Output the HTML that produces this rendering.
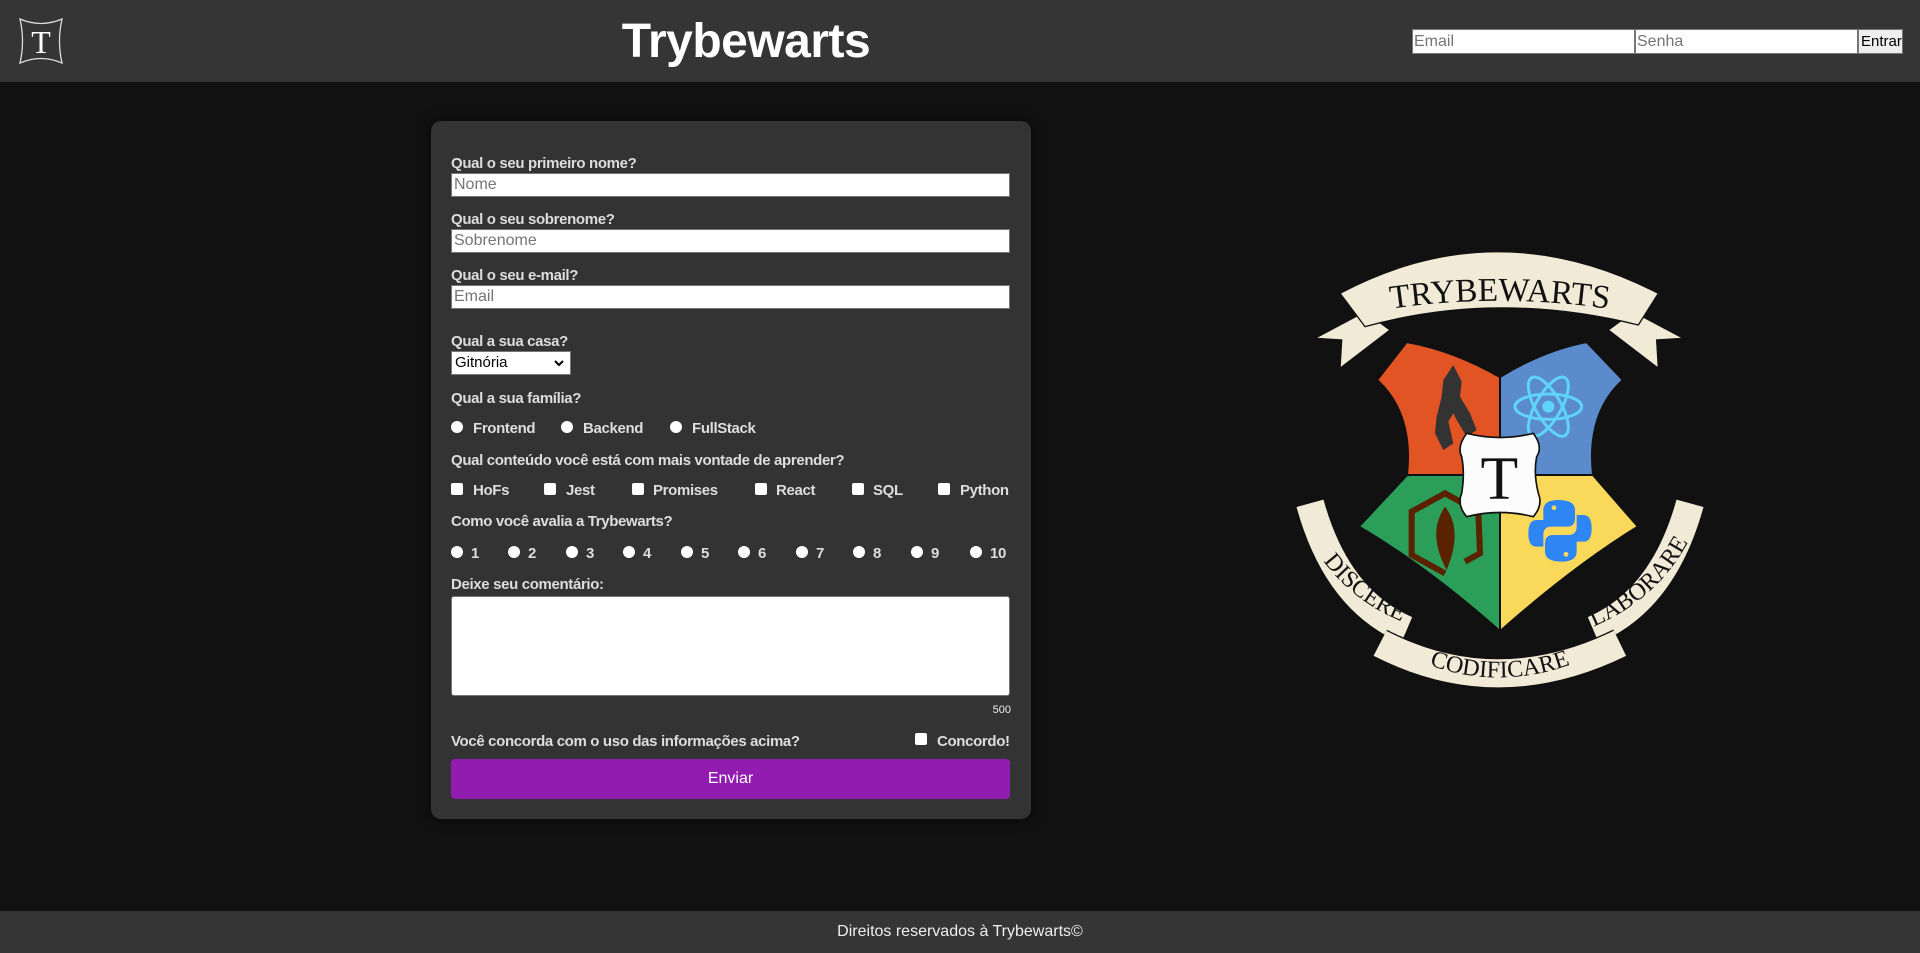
<!DOCTYPE html>
<html><head><meta charset="utf-8"><style>
*{box-sizing:border-box;margin:0;padding:0}
body{width:1920px;height:953px;background:#111;font-family:"Liberation Sans",sans-serif;position:relative;overflow:hidden}
header{position:absolute;left:0;top:0;width:1920px;height:82px;background:#353535}
.title{position:absolute;left:546px;width:400px;top:14px;text-align:center;color:#fff;font-weight:bold;font-size:48px;line-height:56px;letter-spacing:-0.5px}
.ti{position:absolute;top:29px;height:25px;background:#fff;border:1px solid #767676;font-size:16px;color:#757575;line-height:23px;padding-left:1px}
.card{position:absolute;left:431px;top:121px;width:600px;height:698px;background:#333;border-radius:10px;box-shadow:0 0 12px rgba(0,0,0,.6)}
.l{position:absolute;left:20px;color:#ddd;font-weight:bold;font-size:15px;line-height:18px;letter-spacing:-0.35px;white-space:nowrap;margin-top:3px}
.in{position:absolute;left:20px;width:559px;height:24px;background:#fff;border:1px solid #767676;color:#757575;font-size:16px;line-height:22px;padding-left:2px}
.r{position:absolute;width:12px;height:12px;border-radius:50%;background:#fff;margin-top:1px}
.c{position:absolute;width:12px;height:12px;border-radius:2px;background:#fff;margin-top:1px}
footer{position:absolute;left:0;top:911px;width:1920px;height:42px;background:#353535;color:#eee;font-size:16px;text-align:center;line-height:42px}
</style></head><body>
<header>
<svg style="position:absolute;left:17px;top:16px" width="48" height="50" viewBox="0 0 48 50">
<path d="M3,3 Q24,12 45,3 Q40,25 45,47 Q24,38 3,47 Q8,25 3,3Z" fill="none" stroke="#ddd" stroke-width="1.3"/>
<text x="24" y="37" text-anchor="middle" font-family="Liberation Serif,serif" font-size="32" fill="#fff">T</text>
</svg>
<div class="title">Trybewarts</div>
<div class="ti" style="left:1412px;width:223px">Email</div>
<div class="ti" style="left:1635px;width:223px">Senha</div>
<div class="ti" style="left:1858px;width:45px;background:#efefef;color:#000;font-size:15px;padding-left:2px">Entrar</div>
</header>

<div class="card">
<div class="l" style="top:31px">Qual o seu primeiro nome?</div>
<div class="in" style="top:52px">Nome</div>
<div class="l" style="top:87px">Qual o seu sobrenome?</div>
<div class="in" style="top:108px">Sobrenome</div>
<div class="l" style="top:143px">Qual o seu e-mail?</div>
<div class="in" style="top:164px">Email</div>
<div class="l" style="top:209px">Qual a sua casa?</div>
<div class="in" style="top:230px;width:120px;color:#000;font-size:15px;padding-left:3px">Gitnória<svg style="position:absolute;right:6px;top:8px" width="10" height="7" viewBox="0 0 10 7"><path d="M1,1 L5,5 L9,1" fill="none" stroke="#000" stroke-width="2"/></svg></div>
<div class="l" style="top:266px">Qual a sua família?</div>
<div class="r" style="left:20px;top:299px"></div><div class="l" style="left:42px;top:296px">Frontend</div>
<div class="r" style="left:130px;top:299px"></div><div class="l" style="left:152px;top:296px">Backend</div>
<div class="r" style="left:239px;top:299px"></div><div class="l" style="left:261px;top:296px">FullStack</div>
<div class="l" style="top:328px">Qual conteúdo você está com mais vontade de aprender?</div>
<div class="c" style="left:20px;top:361px"></div><div class="l" style="left:42px;top:358px">HoFs</div>
<div class="c" style="left:113px;top:361px"></div><div class="l" style="left:135px;top:358px">Jest</div>
<div class="c" style="left:201px;top:361px"></div><div class="l" style="left:222px;top:358px">Promises</div>
<div class="c" style="left:324px;top:361px"></div><div class="l" style="left:345px;top:358px">React</div>
<div class="c" style="left:421px;top:361px"></div><div class="l" style="left:442px;top:358px">SQL</div>
<div class="c" style="left:507px;top:361px"></div><div class="l" style="left:529px;top:358px">Python</div>
<div class="l" style="top:389px">Como você avalia a Trybewarts?</div>
<div class="r" style="left:20px;top:424px"></div><div class="l" style="left:40px;top:421px">1</div>
<div class="r" style="left:77px;top:424px"></div><div class="l" style="left:97px;top:421px">2</div>
<div class="r" style="left:135px;top:424px"></div><div class="l" style="left:155px;top:421px">3</div>
<div class="r" style="left:192px;top:424px"></div><div class="l" style="left:212px;top:421px">4</div>
<div class="r" style="left:250px;top:424px"></div><div class="l" style="left:270px;top:421px">5</div>
<div class="r" style="left:307px;top:424px"></div><div class="l" style="left:327px;top:421px">6</div>
<div class="r" style="left:365px;top:424px"></div><div class="l" style="left:385px;top:421px">7</div>
<div class="r" style="left:422px;top:424px"></div><div class="l" style="left:442px;top:421px">8</div>
<div class="r" style="left:480px;top:424px"></div><div class="l" style="left:500px;top:421px">9</div>
<div class="r" style="left:539px;top:424px"></div><div class="l" style="left:559px;top:421px">10</div>
<div class="l" style="top:452px">Deixe seu comentário:</div>
<div class="in" style="top:475px;height:100px;border-radius:3px"></div>
<div style="position:absolute;right:20px;top:583px;color:#eee;font-size:11px">500</div>
<div class="l" style="top:609px">Você concorda com o uso das informações acima?</div>
<div class="c" style="left:484px;top:611px"></div><div class="l" style="left:506px;top:609px">Concordo!</div>
<div style="position:absolute;left:20px;top:638px;width:559px;height:40px;background:#921cb0;border-radius:4px;color:#fff;text-align:center;line-height:40px;font-size:16px">Enviar</div>
</div>

<svg style="position:absolute;left:1280px;top:240px" width="440" height="460" viewBox="0 0 1320 1380">
<defs>
<clipPath id="sh"><path d="M290,420 L380,305 Q520,330 660,410 Q790,330 920,305 L1030,420 Q920,520 940,705 L1075,860 Q880,980 660,1175 Q440,980 235,860 L380,705 Q400,520 290,420 Z"/></clipPath>
<path id="tp" d="M250,220 Q650,145 1070,220"/>
<path id="lp" d="M120,950 Q220,1090 380,1150"/>
<path id="bp" d="M400,1255 Q650,1370 920,1255"/>
<path id="rp" d="M940,1160 Q1130,1080 1225,905"/>
</defs>
<!-- top banner tails -->
<path d="M255,215 L105,295 L185,300 L180,385 L330,270 Z" fill="#f1ead6" stroke="#111" stroke-width="4"/>
<path d="M1060,215 L1210,295 L1130,300 L1135,385 L985,270 Z" fill="#f1ead6" stroke="#111" stroke-width="4"/>
<path d="M180,160 Q650,-90 1135,160 L1075,255 Q650,150 255,260 Z" fill="#f1ead6" stroke="#111" stroke-width="4"/>
<text font-family="Liberation Serif,serif" font-size="100" fill="#111"><textPath href="#tp" startOffset="50%" text-anchor="middle">TRYBEWARTS</textPath></text>
<!-- shield -->
<g clip-path="url(#sh)">
<rect x="0" y="0" width="660" height="705" fill="#e35424"/>
<rect x="660" y="0" width="700" height="705" fill="#5b8bcd"/>
<rect x="0" y="705" width="660" height="700" fill="#2b9e5a"/>
<rect x="660" y="705" width="700" height="700" fill="#fad85a"/>
<path d="M0,705 H1320 M660,0 V1380" stroke="#111" stroke-width="6"/>
</g>
<path d="M290,420 L380,305 Q520,330 660,410 Q790,330 920,305 L1030,420 Q920,520 940,705 L1075,860 Q880,980 660,1175 Q440,980 235,860 L380,705 Q400,520 290,420 Z" fill="none" stroke="#111" stroke-width="8"/>
<!-- icons -->
<path d="M520,375 L545,425 L540,470 L570,520 L590,570 L560,590 L530,540 L520,520 L505,545 L520,610 L490,630 L465,580 L470,530 L485,470 L490,420 Z" fill="#333"/>
<g fill="none" stroke="#5fd3f8" stroke-width="9">
<ellipse cx="805" cy="500" rx="100" ry="38"/>
<ellipse cx="805" cy="500" rx="100" ry="38" transform="rotate(60 805 500)"/>
<ellipse cx="805" cy="500" rx="100" ry="38" transform="rotate(120 805 500)"/>
</g>
<circle cx="805" cy="500" r="18" fill="#5fd3f8"/>
<path d="M555,965 L600,940 L595,815 L495,760 L395,815 L395,945 L495,1000" fill="none" stroke="#5a2200" stroke-width="18"/>
<path d="M495,800 Q550,870 500,990 Q440,880 495,800Z" fill="#5a2200"/>
<path d="M835,780 Q790,780 790,810 V840 H770 Q745,840 745,880 Q745,920 770,920 H790 V885 Q790,860 815,860 H860 Q885,860 885,835 V810 Q885,780 835,780Z" fill="#2e86f5"/>
<path d="M845,965 Q890,965 890,935 V905 H910 Q935,905 935,865 Q935,825 910,825 H890 V860 Q890,885 865,885 H820 Q795,885 795,910 V935 Q795,965 845,965Z" fill="#2e86f5"/>
<circle cx="822" cy="803" r="7" fill="#fad85a"/><circle cx="858" cy="943" r="7" fill="#fad85a"/>
<!-- plaque -->
<path d="M560,580 Q660,605 760,580 Q790,620 770,650 Q760,700 775,760 Q790,795 760,830 Q660,805 560,830 Q530,795 545,760 Q555,700 545,650 Q530,620 560,580Z" fill="#fcfcfc" stroke="#111" stroke-width="5"/>
<text x="658" y="775" text-anchor="middle" font-family="Liberation Serif,serif" font-size="185" fill="#111">T</text>
<!-- lower banners -->
<path d="M90,790 Q170,1080 380,1170" fill="none" stroke="#111" stroke-width="92"/>
<path d="M90,790 Q170,1080 380,1170" fill="none" stroke="#f1ead6" stroke-width="84"/>
<path d="M1230,790 Q1150,1080 940,1170" fill="none" stroke="#111" stroke-width="92"/>
<path d="M1230,790 Q1150,1080 940,1170" fill="none" stroke="#f1ead6" stroke-width="84"/>
<path d="M300,1210 Q650,1390 1020,1210" fill="none" stroke="#111" stroke-width="92"/>
<path d="M300,1210 Q650,1390 1020,1210" fill="none" stroke="#f1ead6" stroke-width="84"/>
<g font-family="Liberation Serif,serif" font-size="72" fill="#111">
<text><textPath href="#lp" startOffset="50%" text-anchor="middle">DISCERE</textPath></text>
<text><textPath href="#bp" startOffset="50%" text-anchor="middle">CODIFICARE</textPath></text>
<text><textPath href="#rp" startOffset="50%" text-anchor="middle">LABORARE</textPath></text>
</g>
</svg>

<footer>Direitos reservados à Trybewarts©</footer>
</body></html>
